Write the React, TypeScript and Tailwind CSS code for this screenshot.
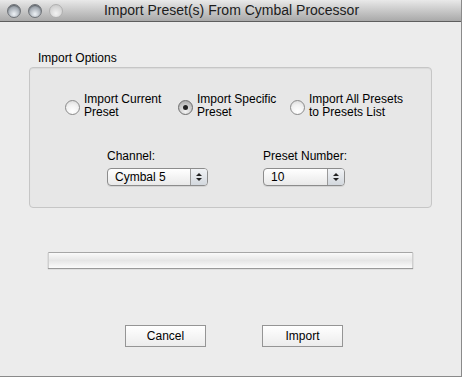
import React from 'react';

const font = { fontFamily: '"Liberation Sans", Arial, sans-serif' };

function Light({ dim }: { dim?: boolean }) {
  return (
    <div
      className={
        dim
          ? 'w-[14px] h-[14px] rounded-full border border-[#b0b0b0] bg-[radial-gradient(circle_at_50%_70%,#f2f2f2_0%,#d6d6d6_60%,#c2c2c2_100%)]'
          : 'w-[14px] h-[14px] rounded-full border border-[#6f7378] bg-[radial-gradient(circle_at_50%_75%,#eef2f6_0%,#a9b0b8_55%,#7d848c_100%)] shadow-[inset_0_1px_1px_rgba(0,0,0,0.35)]'
      }
    />
  );
}

function Radio({ on, lines }: { on?: boolean; lines: string[] }) {
  return (
    <div className="flex items-center gap-[4px]">
      <div
        className={
          on
            ? 'w-[15px] h-[15px] mt-[3px] rounded-full border border-[#6e6e6e] bg-[radial-gradient(circle_at_50%_80%,#f4f4f4_0%,#c9c9c9_55%,#9c9c9c_100%)] flex items-center justify-center'
            : 'w-[15px] h-[15px] mt-[3px] rounded-full border border-[#8a8a8a] bg-[radial-gradient(circle_at_50%_80%,#ffffff_0%,#f1f1f1_55%,#d4d4d4_100%)]'
        }
      >
        {on && <div className="w-[5px] h-[5px] rounded-full bg-[#222]" />}
      </div>
      <div className="text-[12px] leading-[13px] text-black">
        {lines.map((l) => (
          <div key={l}>{l}</div>
        ))}
      </div>
    </div>
  );
}

function Popup({ value, width }: { value: string; width: string }) {
  return (
    <div
      className={`${width} h-[18px] rounded-[4px] border border-[#8c8c8c] flex overflow-hidden bg-gradient-to-b from-[#ffffff] to-[#e9e9e9] shadow-[0_1px_0_rgba(0,0,0,0.08)]`}
    >
      <div className="flex-1 pl-[7px] text-[12px] leading-[16px] text-black">{value}</div>
      <div className="w-[17px] border-l border-[#9a9a9a] bg-gradient-to-b from-[#f1f3f6] to-[#d3d8de] flex flex-col items-center justify-center gap-[2px]">
        <svg width="6" height="3" viewBox="0 0 6 3">
          <path d="M0 3 L3 0 L6 3 Z" fill="#222" />
        </svg>
        <svg width="6" height="3" viewBox="0 0 6 3">
          <path d="M0 0 L3 3 L6 0 Z" fill="#222" />
        </svg>
      </div>
    </div>
  );
}

function Button({ label }: { label: string }) {
  return (
    <div className="w-[81px] h-[22px] border border-[#959595] bg-gradient-to-b from-[#ffffff] to-[#ececec] text-[12px] leading-[20px] text-center text-black">
      {label}
    </div>
  );
}

export default function App() {
  return (
    <div style={font} className="w-[462px] h-[377px] bg-[#ececec] border-r border-b border-[#8a8a8a] flex flex-col">
      {/* Titelleiste */}
      <div className="h-[22px] shrink-0 relative flex items-center bg-gradient-to-b from-[#e9e9e9] to-[#a9a9a9] border-b border-[#5e5e5e]">
        <div className="flex gap-[7px] pl-[7px]">
          <Light />
          <Light />
          <Light dim />
        </div>
        <div className="absolute inset-0 flex items-center justify-center pl-[2px] text-[14px] text-[#1c1c1c]">
          Import Preset(s) From Cymbal Processor
        </div>
      </div>

      {/* Inhalt */}
      <div className="pl-[38px] pt-[29px] text-[12px] leading-[14px] text-black">Import Options</div>
      <div className="ml-[29px] mt-[2px] w-[403px] h-[141px] rounded-[4px] border border-[#c6c6c6] bg-[#e7e7e7] shadow-[inset_0_1px_1px_rgba(0,0,0,0.06)]">
        <div className="flex pl-[35px] pt-[25px]">
          <div className="w-[113px]">
            <Radio lines={['Import Current', 'Preset']} />
          </div>
          <div className="w-[112px]">
            <Radio on lines={['Import Specific', 'Preset']} />
          </div>
          <Radio lines={['Import All Presets', 'to Presets List']} />
        </div>
        <div className="flex pl-[77px] pt-[30px]">
          <div className="w-[156px]">
            <div className="text-[12px] leading-[14px] mb-[5px]">Channel:</div>
            <Popup value="Cymbal 5" width="w-[101px]" />
          </div>
          <div>
            <div className="text-[12px] leading-[14px] mb-[5px]">Preset Number:</div>
            <Popup value="10" width="w-[82px]" />
          </div>
        </div>
      </div>

      {/* Fortschrittsbalken */}
      <div className="ml-[48px] mt-[44px] w-[365px] h-[16px] shrink-0 border-t border-[#a6a6a6] border-x border-x-[#cfcfcf] bg-gradient-to-b from-[#fafafa] via-[#e6e6e6] to-[#fbfbfb] shadow-[0_1px_1px_rgba(0,0,0,0.35)]" />

      {/* Knöpfe */}
      <div className="flex pl-[125px] mt-[57px] gap-[56px]">
        <Button label="Cancel" />
        <Button label="Import" />
      </div>
    </div>
  );
}
